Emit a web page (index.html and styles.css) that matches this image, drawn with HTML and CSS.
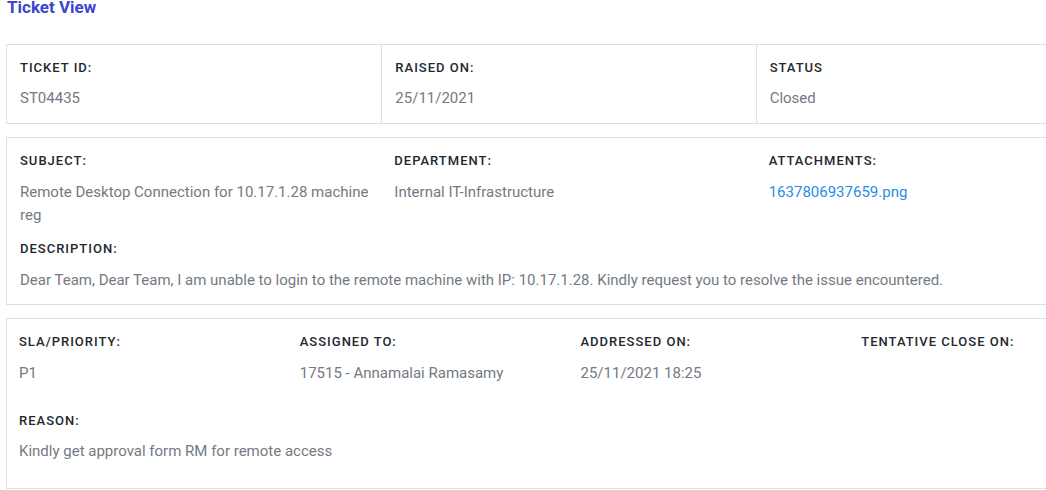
FILE: index.html
```html
<!DOCTYPE html>
<html lang="en">
<head>
<meta charset="utf-8">
<title>Ticket View</title>
<link rel="stylesheet" href="styles.css">
</head>
<body>
<div class="page">
  <h1 class="title">Ticket View</h1>

  <section class="card card-split">
    <div class="cell">
      <div class="label">TICKET ID:</div>
      <div class="value">ST04435</div>
    </div>
    <div class="cell">
      <div class="label">RAISED ON:</div>
      <div class="value">25/11/2021</div>
    </div>
    <div class="cell">
      <div class="label">STATUS</div>
      <div class="value">Closed</div>
    </div>
  </section>

  <section class="card card-info">
    <div class="grid3">
      <div class="field">
        <div class="label">SUBJECT:</div>
        <div class="value">Remote Desktop Connection for 10.17.1.28 machine reg</div>
      </div>
      <div class="field">
        <div class="label">DEPARTMENT:</div>
        <div class="value">Internal IT-Infrastructure</div>
      </div>
      <div class="field">
        <div class="label">ATTACHMENTS:</div>
        <div class="value"><a class="link" href="#">1637806937659.png</a></div>
      </div>
    </div>
    <div class="field full">
      <div class="label">DESCRIPTION:</div>
      <div class="value">Dear Team, Dear Team, I am unable to login to the remote machine with IP: 10.17.1.28. Kindly request you to resolve the issue encountered.</div>
    </div>
  </section>

  <section class="card card-sla">
    <div class="grid4">
      <div class="field">
        <div class="label">SLA/PRIORITY:</div>
        <div class="value">P1</div>
      </div>
      <div class="field">
        <div class="label">ASSIGNED TO:</div>
        <div class="value">17515 - Annamalai Ramasamy</div>
      </div>
      <div class="field">
        <div class="label">ADDRESSED ON:</div>
        <div class="value">25/11/2021 18:25</div>
      </div>
      <div class="field">
        <div class="label">TENTATIVE CLOSE ON:</div>
        <div class="value"></div>
      </div>
    </div>
    <div class="field full">
      <div class="label">REASON:</div>
      <div class="value">Kindly get approval form RM for remote access</div>
    </div>
  </section>
</div>
</body>
</html>
```

FILE: styles.css
```css
html, body {
  margin: 0;
  padding: 0;
  overflow: hidden;
  background: #ffffff;
}

body {
  font-family: Roboto, "Liberation Sans", Arial, sans-serif;
}

.page {
  width: 1125px;
  padding: 0 0 0 6px;
}

.title {
  margin: 0 0 29px 1px;
  font-size: 17px;
  line-height: 15px;
  font-weight: 700;
  color: #3d46cb;
}

.card {
  border: 1px solid #dcdfe4;
  margin-bottom: 13px;
  box-sizing: border-box;
}

.label {
  font-size: 13px;
  line-height: 20px;
  font-weight: 500;
  letter-spacing: 1px;
  color: #24282d;
  margin-bottom: 9px;
}

.value {
  font-size: 15px;
  line-height: 23px;
  color: #737a83;
  min-height: 23px;
}

.link {
  color: #2b8ce6;
  text-decoration: none;
}

/* top summary card */
.card-split {
  display: grid;
  grid-template-columns: repeat(3, 1fr);
}

.cell {
  padding: 12.5px 13px 13px;
}

.cell + .cell {
  border-left: 1px solid #dcdfe4;
}

/* subject / description card */
.card-info {
  padding: 13.5px 0 12px;
}

.card-info .label {
  margin-bottom: 10px;
}

.grid3 {
  display: grid;
  grid-template-columns: repeat(3, 1fr);
}

.field {
  padding: 0 10px 0 13px;
}

.card-info .full {
  margin-top: 12px;
}

/* SLA card */
.card-sla {
  padding: 12.5px 0 25px;
}

.grid4 {
  display: grid;
  grid-template-columns: repeat(4, 1fr);
}

.card-sla .field {
  padding-left: 12px;
}

.card-sla .grid4 .label {
  margin-bottom: 10px;
}

.card-sla .full {
  margin-top: 26px;
}
```
